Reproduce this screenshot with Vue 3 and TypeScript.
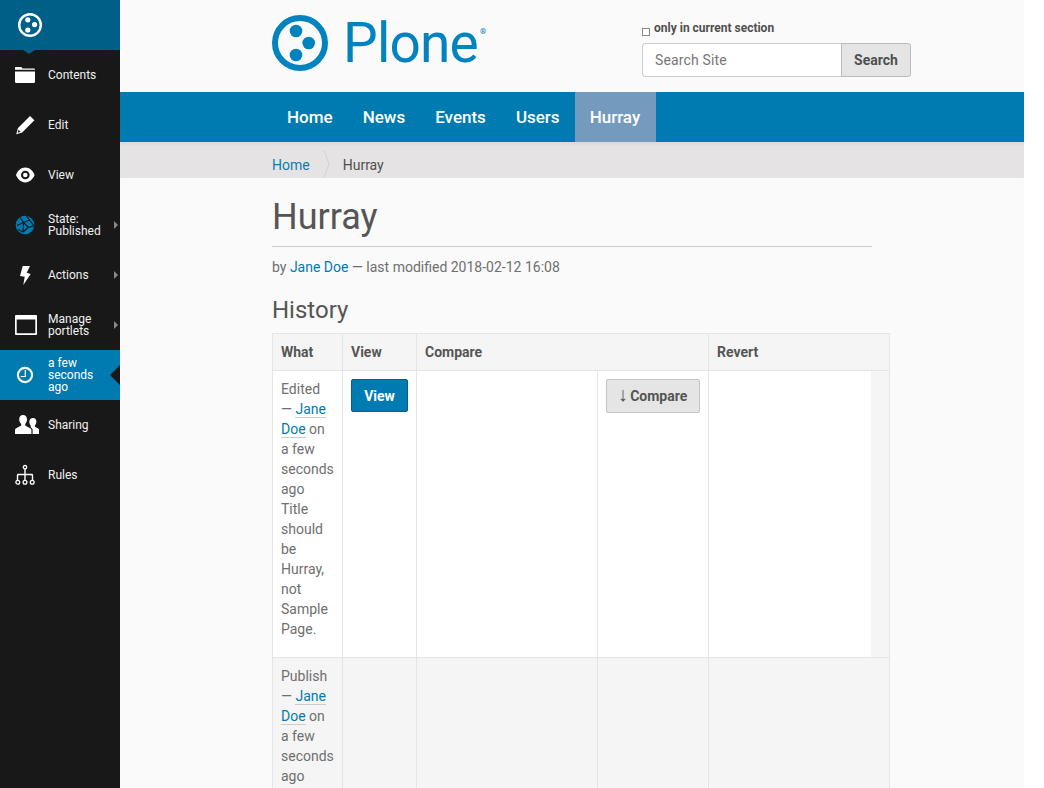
<script setup lang="ts">
const navItems = ['Home', 'News', 'Events', 'Users', 'Hurray']
</script>

<template>
  <div class="page">
    <aside class="toolbar">
      <div class="toolbar-logo">
        <svg width="26" height="26" viewBox="0 0 26 26">
          <circle cx="13" cy="13" r="10.8" fill="none" stroke="#fff" stroke-width="2.4" />
          <circle cx="10.8" cy="7.8" r="2.6" fill="#fff" />
          <circle cx="17.6" cy="12.6" r="2.6" fill="#fff" />
          <circle cx="10.8" cy="18" r="2.6" fill="#fff" />
        </svg>
      </div>
      <ul class="menu">
        <li>
          <svg class="icon" width="22" height="22" viewBox="1 0 22 22">
            <path d="M1 5.8V4C1 3.400 1.400 3 2 3h5.200l1.400 1.600H20c.6 0 1 .3 1 .8v.4z" fill="#fff" />
            <path d="M1 7.500h20v10.300c0 .7-.4 1.200-1 1.200H2c-.6 0-1-.5-1-1.200z" fill="#fff" />
          </svg>
          <span>Contents</span>
        </li>
        <li>
          <svg class="icon" width="22" height="22" viewBox="0 0 22 22">
            <path d="M15 2 19.400 6.300 7.200 18.500 1.200 20.200 3 14zM3.500 15.800l-.9 2.900 2.900-.9z" fill="#fff" fill-rule="evenodd" />
          </svg>
          <span>Edit</span>
        </li>
        <li>
          <svg class="icon" width="22" height="22" viewBox="0 0 22 22">
            <path d="M10.300 3.600C5.800 3.600 2.600 7 1 11c1.600 4 4.800 7.400 9.300 7.400s7.700-3.400 9.300-7.400c-1.600-4-4.800-7.400-9.300-7.400zm0 11.700a4.300 4.300 0 1 1 0-8.600 4.300 4.300 0 0 1 0 8.600z" fill="#fff" fill-rule="evenodd" />
            <circle cx="10.300" cy="11" r="2.300" fill="#fff" />
          </svg>
          <span>View</span>
        </li>
        <li class="has-arrow">
          <svg class="icon" width="22" height="22" viewBox="0 0 22 22">
            <circle cx="10" cy="11" r="9.300" fill="#007bb1" />
            <path d="M5 3.500 8.500 8.500 2 11.500M8.500 8.500 14.500 6 11.500 2M14.500 6l4.500 6-6 1.500-5 4.500M8.500 8.500l5 5M8.500 8.500 8 18 3 15.500" stroke="#181818" stroke-width="1.100" fill="none" />
          </svg>
          <span>State:<br />Published</span>
        </li>
        <li class="has-arrow">
          <svg class="icon" width="22" height="22" viewBox="0 0 22 22">
            <path d="M7.700 2H15L11.700 8.700 15.700 10 8.300 21 9.700 12.700 5 12z" fill="#fff" />
          </svg>
          <span>Actions</span>
        </li>
        <li class="has-arrow">
          <svg class="icon wide" width="24" height="22" viewBox="0 0 24 22">
            <path d="M1 1h20c.6 0 1 .4 1 1v18c0 .6-.4 1-1 1H1c-.6 0-1-.4-1-1V2c0-.6.4-1 1-1zm.7 4.400v13.900h18.600V5.400z" fill="#fff" fill-rule="evenodd" />
          </svg>
          <span>Manage<br />portlets</span>
        </li>
        <li class="current">
          <svg class="icon" width="22" height="22" viewBox="0 0 22 22">
            <circle cx="10" cy="11" r="7.100" fill="none" stroke="#fff" stroke-width="2.100" />
            <path d="M10.300 6v6.500H5.700" fill="none" stroke="#fff" stroke-width="1.200" />
          </svg>
          <span>a few<br />seconds<br />ago</span>
        </li>
        <li>
          <svg class="icon widest" width="26" height="22" viewBox="1 0 26 22">
            <path d="M9 1c2.600 0 4 2 4 4.600 0 1.800-.7 3.300-1.800 4.300v1.700l5.300 2.800c.6.300.9.800.9 1.400V20H1v-4.200c0-.6.300-1.100.9-1.400l5.300-2.800V9.900C6 8.900 5.200 7.400 5.200 5.600 5.200 3 6.400 1 9 1z" fill="#fff" />
            <path d="M19 4c2.200 0 3.400 1.700 3.400 3.800 0 1.500-.6 2.800-1.500 3.600v1.400l3.300 1.700c.5.300.8.700.8 1.200V20h-6.400v-4c0-1-.5-1.800-1.400-2.300l-.5-.3v-2c-.9-.8-1.400-2.200-1.400-3.600C15.300 5.700 16.800 4 19 4z" fill="#fff" />
          </svg>
          <span>Sharing</span>
        </li>
        <li>
          <svg class="icon" width="22" height="22" viewBox="0.700 0 22 22">
            <g fill="none" stroke="#fff" stroke-width="1.300">
              <circle cx="10.700" cy="3.200" r="1.700" />
              <circle cx="3.500" cy="18.200" r="1.900" />
              <circle cx="10.700" cy="18.200" r="1.900" />
              <circle cx="17.900" cy="18.200" r="1.900" />
            </g>
            <path d="M10 5h1.400v4.800h6c1.100 0 1.500.6 1.500 1.600v5h-1.400v-4.500c0-.4-.2-.7-.6-.7h-5.500v5.200H10v-5.200H4.500c-.4 0-.6.3-.6.700v4.500H2.500v-5c0-1 .4-1.600 1.500-1.600h6z" fill="#fff" />
          </svg>
          <span>Rules</span>
        </li>
      </ul>
    </aside>

    <div class="site">
      <header class="site-header">
        <div class="brand">
          <svg width="58" height="58" viewBox="0 0 58 58">
            <circle cx="29" cy="29" r="25" fill="none" stroke="#0083be" stroke-width="6" />
            <circle cx="25" cy="17" r="6.300" fill="#0083be" />
            <circle cx="37.700" cy="29" r="6.300" fill="#0083be" />
            <circle cx="25" cy="41" r="6.300" fill="#0083be" />
          </svg>
          <span class="wordmark">Plone</span><span class="reg">®</span>
        </div>
        <form class="search" @submit.prevent>
          <label class="section-only"><span class="check"></span>only in current section</label>
          <div class="search-row">
            <input class="search-input" type="text" placeholder="Search Site" />
            <button class="search-btn">Search</button>
          </div>
        </form>
      </header>

      <nav class="main-nav">
        <a v-for="item in navItems" :key="item" :class="{ selected: item === 'Hurray' }">{{ item }}</a>
      </nav>

      <div class="breadcrumbs">
        <a class="crumb">Home</a>
        <svg class="crumb-sep" width="7" height="28" viewBox="0 0 7 28">
          <path d="M1 0 6 14 1 28" fill="none" stroke="#d2d0d0" stroke-width="1" />
        </svg>
        <span class="crumb">Hurray</span>
      </div>

      <main class="content">
        <h1>Hurray</h1>
        <div class="byline">by <a>Jane Doe</a> — last modified 2018-02-12 16:08</div>
        <h2>History</h2>
        <table class="history">
          <colgroup>
            <col style="width: 70px" />
            <col style="width: 74px" />
            <col style="width: 181px" />
            <col style="width: 111px" />
            <col style="width: 181px" />
          </colgroup>
          <thead>
            <tr>
              <th>What</th>
              <th>View</th>
              <th colspan="2">Compare</th>
              <th>Revert</th>
            </tr>
          </thead>
          <tbody>
            <tr class="first">
              <td>
                Edited — <a class="user">Jane Doe</a> on a few seconds ago
                Title should be Hurray, not Sample Page.
              </td>
              <td><button class="btn primary">View</button></td>
              <td></td>
              <td><button class="btn plain"><span class="arrow">↓</span> Compare</button></td>
              <td class="revert"><div class="gutter"></div></td>
            </tr>
            <tr class="second">
              <td>Publish — <a class="user">Jane Doe</a> on a few seconds ago</td>
              <td></td>
              <td></td>
              <td></td>
              <td></td>
            </tr>
          </tbody>
        </table>
      </main>
    </div>
  </div>
</template>

<style>
html, body {
  margin: 0;
  background: #fff;
  overflow: hidden;
}
</style>

<style scoped>
.page {
  display: flex;
  width: 1024px;
  height: 788px;
  overflow: hidden;
  opacity: 0.999;
  font-family: Roboto, "Liberation Sans", sans-serif;
  color: #4f4f4f;
  background: #fafafa;
}

.toolbar {
  width: 120px;
  flex: none;
  background: #181818;
  color: #fff;
}

.toolbar-logo {
  position: relative;
  height: 50px;
  display: flex;
  align-items: center;
  padding-left: 17px;
  background: #005f87;
}

.toolbar-logo::after {
  content: "";
  position: absolute;
  left: 23px;
  bottom: -4px;
  border-top: 4px solid #005f87;
  border-left: 6px solid transparent;
  border-right: 6px solid transparent;
}

.menu {
  list-style: none;
  margin: 0;
  padding: 0;
}

.menu li {
  position: relative;
  height: 50px;
  display: flex;
  align-items: center;
  padding-left: 15px;
  font-size: 12px;
  line-height: 12px;
  color: #f0f0f0;
}

.menu li > span {
  margin-left: 11px;
}

.menu .icon {
  flex: none;
}

.menu .icon.wide {
  margin-right: -2px;
}

.menu .icon.widest {
  margin-right: -4px;
}

.has-arrow::after {
  content: "";
  position: absolute;
  right: 2px;
  top: 21px;
  border-left: 4px solid #888;
  border-top: 4px solid transparent;
  border-bottom: 4px solid transparent;
}

.menu li.current {
  background: #007bb1;
  color: #fff;
}

.current::after {
  content: "";
  position: absolute;
  right: 0;
  top: 15px;
  border-right: 10px solid #181818;
  border-top: 10px solid transparent;
  border-bottom: 10px solid transparent;
}

.site {
  flex: 1;
  min-width: 0;
}

.site-header {
  height: 92px;
  padding-left: 151px;
  display: flex;
  box-sizing: border-box;
}

.brand {
  display: flex;
  align-items: flex-start;
  width: 371px;
  padding-top: 14px;
  color: #0083be;
}

.wordmark {
  font-size: 55px;
  font-weight: 400;
  line-height: 58px;
  letter-spacing: -0.800px;
  margin-left: 14px;
}

.reg {
  font-size: 8px;
  line-height: 10px;
  font-weight: 700;
  margin: 13px 0 0 2px;
}

.search {
  padding-top: 20px;
}

.section-only {
  display: flex;
  height: 23px;
  font-size: 12px;
  font-weight: 700;
  line-height: 16px;
}

.check {
  width: 6px;
  height: 6px;
  margin: 8px 4px 0 0;
  background: #fff;
  border: 1px solid #888;
}

.search-row {
  display: flex;
  height: 34px;
}

.search-input {
  width: 199px;
  box-sizing: border-box;
  padding: 0 12px;
  border: 1px solid #ccc;
  border-right: none;
  border-radius: 4px 0 0 4px;
  background: #fff;
  font: 14px Roboto, sans-serif;
  letter-spacing: 0.150px;
}

.search-input::placeholder {
  color: #777;
}

.search-btn {
  width: 70px;
  padding: 0;
  border: 1px solid #bbb;
  border-radius: 0 3px 3px 0;
  background: #e5e5e5;
  color: #4f4f4f;
  font: 700 14px Roboto, sans-serif;
}

.main-nav {
  height: 50px;
  display: flex;
  padding-left: 152px;
  background: #007bb1;
}

.main-nav a {
  display: flex;
  align-items: center;
  padding: 0 15px;
  color: #fff;
  font-size: 17px;
  font-weight: 500;
}

.main-nav a.selected {
  padding-right: 16px;
  background: #749bbd;
}

.breadcrumbs {
  height: 36px;
  box-sizing: border-box;
  display: flex;
  align-items: center;
  padding: 8px 0 0 152px;
  background: #e5e3e4;
  font-size: 14px;
  box-shadow: inset 0 4px 4px -3px rgba(0, 0, 0, 0.08);
}

.crumb {
  padding-top: 2px;
}

a.crumb {
  color: #0f7bb0;
}

.crumb-sep {
  align-self: flex-end;
  margin: 0 13px 0 13px;
}

.content {
  width: 618px;
  padding: 19px 0 0 152px;
}

h1 {
  margin: 0;
  padding-bottom: 9px;
  width: 600px;
  border-bottom: 1px solid #ccc;
  font-size: 36px;
  font-weight: 400;
  line-height: 40px;
  color: #555;
}

.byline {
  margin-top: 10px;
  font-size: 14px;
  line-height: 20px;
  color: #6f6f6f;
}

.byline a {
  color: #007bb1;
}

h2 {
  margin: 19px 0 0;
  font-size: 24px;
  font-weight: 400;
  line-height: 28px;
  color: #555;
}

.history {
  margin-top: 9px;
  width: 618px;
  table-layout: fixed;
  border-collapse: collapse;
  font-size: 14px;
  line-height: 20px;
  color: #6f6f6f;
}

.history th,
.history td {
  border: 1px solid #e5e5e5;
  padding: 8px;
  text-align: left;
  vertical-align: top;
}

.history th {
  height: 20px;
  background: #f5f5f5;
  color: #555;
  font-weight: 700;
}

.first td {
  background: #fff;
  padding-bottom: 18px;
}

.first td.revert {
  position: relative;
  background: #fff;
}

.gutter {
  position: absolute;
  top: 0;
  right: 0;
  bottom: 0;
  width: 18px;
  background: #f5f5f5;
}

.second td {
  background: #f5f5f5;
}

.user {
  color: #007bb1;
  border-bottom: 1px solid #ccc;
}

.btn {
  height: 33px;
  padding: 0;
  border-radius: 2px;
  font: 700 14px Roboto, sans-serif;
}

.primary {
  width: 57px;
  background: #007bb1;
  border: 1px solid #00618c;
  color: #fff;
}

.plain {
  width: 94px;
  height: 34px;
  padding-right: 1px;
  background: #e5e5e5;
  border: 1px solid #c4c4c4;
  color: #555;
}

.arrow {
  font-family: "Liberation Sans", sans-serif;
  font-weight: 400;
  font-size: 20px;
  line-height: 0;
  margin-right: -1px;
}
</style>
